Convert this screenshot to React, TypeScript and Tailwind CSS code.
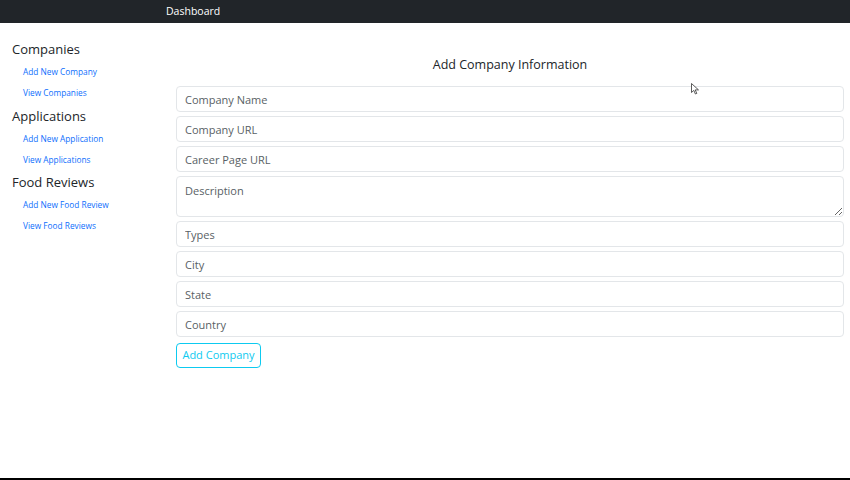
const sidebar = [
  { title: 'Companies', links: ['Add New Company', 'View Companies'] },
  { title: 'Applications', links: ['Add New Application', 'View Applications'] },
  { title: 'Food Reviews', links: ['Add New Food Review', 'View Food Reviews'] },
]

const fields = ['Company Name', 'Company URL', 'Career Page URL']
const fieldsAfter = ['Types', 'City', 'State', 'Country']

function Field({ label }: { label: string }) {
  return (
    <input
      placeholder={label}
      className="h-[26px] w-full rounded-[4px] border border-[#e3e6e9] bg-white px-[8px] text-[11px] text-[#212529] outline-none placeholder:text-[#595f65]"
    />
  )
}

export default function App() {
  return (
    <div
      className="relative flex h-[480px] flex-col border-b-2 border-black bg-white"
      style={{ fontFamily: '"Open Sans", "Noto Sans", sans-serif' }}
    >
      <nav className="flex h-[23px] items-center bg-[#212529] pl-[166px] text-[10.5px] text-white">
        Dashboard
      </nav>

      <div className="flex flex-1">
        <aside className="w-[176px] shrink-0 pl-[12px] pt-[18px]">
          {sidebar.map((group) => (
            <div key={group.title} className="mb-[4.5px]">
              <h3 className="text-[13px] leading-[16px] text-[#212529]">{group.title}</h3>
              <ul className="mt-[4px] pl-[11px]">
                {group.links.map((l) => (
                  <li key={l} className="py-[4px] text-[8.3px] leading-[13px] text-[#0d6efd]">
                    <a href="#">{l}</a>
                  </li>
                ))}
              </ul>
            </div>
          ))}
        </aside>

        <main className="flex-1 pr-[6px] pt-[33px]">
          <h2 className="mb-[13px] text-center text-[12.5px] leading-[17px] text-[#212529]">
            Add Company Information
          </h2>
          <form className="flex flex-col gap-[4px]">
            {fields.map((f) => (
              <Field key={f} label={f} />
            ))}
            <textarea
              placeholder="Description"
              className="h-[41px] w-full rounded-[4px] border border-[#e3e6e9] bg-white px-[8px] py-[6px] text-[11px] text-[#212529] outline-none placeholder:text-[#595f65]"
            />
            {fieldsAfter.map((f) => (
              <Field key={f} label={f} />
            ))}
            <div>
              <button
                type="button"
                className="h-[25px] w-[85px] rounded-[4px] border border-[#0dcaf0] text-[11px] text-[#0dcaf0]"
              >
                Add Company
              </button>
            </div>
          </form>
        </main>
      </div>

      <svg className="absolute left-[691px] top-[83px]" width="9" height="12" viewBox="0 0 9 12">
        <path d="M0.5 0.5 L0.5 9.5 L2.8 7.4 L4.4 11 L5.8 10.4 L4.2 6.9 L7.5 6.9 Z" fill="white" stroke="#333" strokeWidth="0.8" />
      </svg>
    </div>
  )
}
